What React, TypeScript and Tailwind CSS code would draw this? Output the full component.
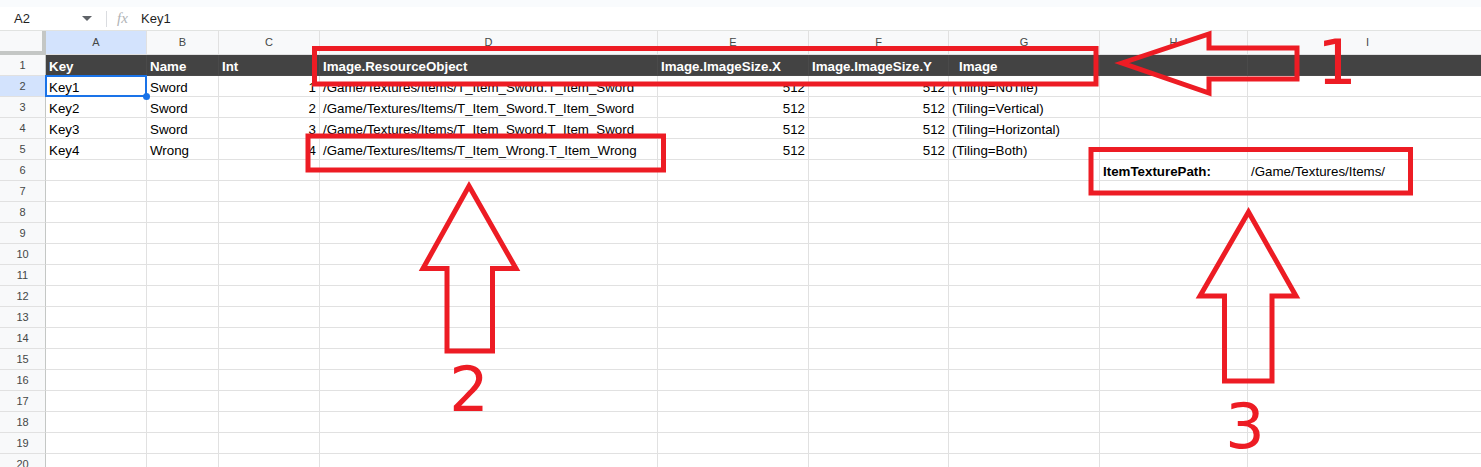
import React from "react";

const COLS = [
  { id: "A", w: 101 },
  { id: "B", w: 72 },
  { id: "C", w: 101 },
  { id: "D", w: 338 },
  { id: "E", w: 151 },
  { id: "F", w: 140 },
  { id: "G", w: 151 },
  { id: "H", w: 148 },
  { id: "I", w: 240 },
];

type Cell = { v: string; right?: boolean; bold?: boolean };

const header = ["Key", "Name", "Int", "Image.ResourceObject", "Image.ImageSize.X", "Image.ImageSize.Y", "Image", "", ""];

const data: Record<number, Cell[]> = {
  2: [{ v: "Key1" }, { v: "Sword" }, { v: "1", right: true }, { v: "/Game/Textures/Items/T_Item_Sword.T_Item_Sword" }, { v: "512", right: true }, { v: "512", right: true }, { v: "(Tiling=NoTile)" }],
  3: [{ v: "Key2" }, { v: "Sword" }, { v: "2", right: true }, { v: "/Game/Textures/Items/T_Item_Sword.T_Item_Sword" }, { v: "512", right: true }, { v: "512", right: true }, { v: "(Tiling=Vertical)" }],
  4: [{ v: "Key3" }, { v: "Sword" }, { v: "3", right: true }, { v: "/Game/Textures/Items/T_Item_Sword.T_Item_Sword" }, { v: "512", right: true }, { v: "512", right: true }, { v: "(Tiling=Horizontal)" }],
  5: [{ v: "Key4" }, { v: "Wrong" }, { v: "4", right: true }, { v: "/Game/Textures/Items/T_Item_Wrong.T_Item_Wrong" }, { v: "512", right: true }, { v: "512", right: true }, { v: "(Tiling=Both)" }],
  6: [{ v: "" }, { v: "" }, { v: "" }, { v: "" }, { v: "" }, { v: "" }, { v: "" }, { v: "ItemTexturePath:", bold: true }, { v: "/Game/Textures/Items/" }],
};

function FormulaBar() {
  return (
    <div className="flex flex-col">
      <div className="h-[7px] bg-[#f9fbfd]" />
      <div className="flex h-[24px] items-center border-b border-[#e1e3e1] bg-white text-[13px] text-[#1f1f1f]">
        <div className="flex w-[100px] items-center justify-between pl-[14px] pr-[8px]">
          <span>A2</span>
          <svg width="10" height="6" viewBox="0 0 10 6">
            <path d="M0 0 L10 0 L5 5 Z" fill="#5f6368" />
          </svg>
        </div>
        <div className="mx-[6px] h-[16px] w-px bg-[#dadce0]" />
        <span className="ml-[4px] w-[22px] font-['Liberation_Serif',serif] text-[15px] italic text-[#b0b3b6]">fx</span>
        <span className="ml-[2px]">Key1</span>
      </div>
    </div>
  );
}

function ColumnHeader() {
  return (
    <div className="flex h-[24px]">
      <div className="w-[46px] shrink-0 border-r-4 border-b-4 border-[#c4c7c5] bg-[#f8f9fa]" />
      {COLS.map((c) => (
        <div
          key={c.id}
          style={{ width: c.w }}
          className={`flex shrink-0 items-center justify-center border-r border-b border-[#e1e1e1] text-[11px] text-[#444746] ${c.id === "A" ? "bg-[#d3e3fd]" : "bg-[#f8f9fa]"}`}
        >
          {c.id}
        </div>
      ))}
    </div>
  );
}

function RowHead({ n }: { n: number }) {
  return (
    <div
      className={`flex w-[46px] shrink-0 items-center justify-center border-r border-b border-r-[#c4c7c5] border-b-[#e1e1e1] text-[11px] text-[#444746] ${n === 2 ? "bg-[#d3e3fd]" : "bg-[#f8f9fa]"}`}
    >
      {n}
    </div>
  );
}

function Row({ n }: { n: number }) {
  if (n === 1) {
    return (
      <div className="flex h-[21px]">
        <RowHead n={1} />
        {COLS.map((c, i) => (
          <div
            key={c.id}
            style={{ width: c.w }}
            className={`flex shrink-0 items-end overflow-hidden whitespace-nowrap border-r border-b border-[#4a4a4a] bg-[#434343] pr-[3px] text-[13.33px] font-bold leading-[17px] text-white ${c.id === "G" ? "pl-[10px]" : "pl-[3px]"}`}
          >
            {header[i]}
          </div>
        ))}
      </div>
    );
  }
  const cells = data[n] || [];
  return (
    <div className="flex h-[21px]">
      <RowHead n={n} />
      {COLS.map((c, i) => {
        const cell = cells[i];
        return (
          <div
            key={c.id}
            style={{ width: c.w }}
            className={`relative flex shrink-0 items-end whitespace-nowrap border-r border-b border-[#e1e1e1] bg-white px-[3px] text-[13.33px] leading-[17px] text-black ${cell?.right ? "justify-end" : ""} ${cell?.bold ? "font-bold" : ""}`}
          >
            {cell?.v}
            {n === 2 && i === 0 && (
              <>
                <div className="absolute -top-[1px] -left-[1px] right-[-1px] bottom-[-1px] z-10 border-2 border-[#1a73e8]" />
                <div className="absolute -right-[4px] -bottom-[4px] z-10 h-[7px] w-[7px] rounded-full bg-[#1a73e8]" />
              </>
            )}
          </div>
        );
      })}
    </div>
  );
}

function Annotations() {
  const red = "#ed1c24";
  return (
    <svg className="pointer-events-none absolute inset-0 z-20" width="1481" height="467" viewBox="0 0 1481 467">
      <g fill="none" stroke={red} strokeWidth="5" strokeLinejoin="miter">
        <rect x="314.5" y="48.5" width="781.5" height="35.5" />
        <polygon points="1122,63 1209,34 1209,48 1297,48 1297,79 1209,79 1209,93" />
        <rect x="308" y="136" width="355.5" height="34" />
        <polygon points="469,186 516,268.5 492.5,268.5 492.5,351 447,351 447,268.5 423,268.5" />
        <rect x="1091" y="149.5" width="319.5" height="43.5" />
        <polygon points="1248.5,212 1296,296 1272,296 1272,381 1224.5,381 1224.5,296 1200,296" />
      </g>
      <g fill={red} fontFamily="'DejaVu Sans', sans-serif" fontSize="62" textAnchor="middle">
        <text x="1337" y="84">1</text>
        <text x="469" y="411">2</text>
        <text x="1245" y="448">3</text>
      </g>
    </svg>
  );
}

export default function App() {
  const rows = Array.from({ length: 20 }, (_, i) => i + 1);
  return (
    <div className="relative h-[467px] w-[1481px] overflow-hidden bg-white font-['Liberation_Sans',Arial,sans-serif]">
      <FormulaBar />
      <ColumnHeader />
      {rows.map((n) => (
        <Row key={n} n={n} />
      ))}
      <Annotations />
    </div>
  );
}
